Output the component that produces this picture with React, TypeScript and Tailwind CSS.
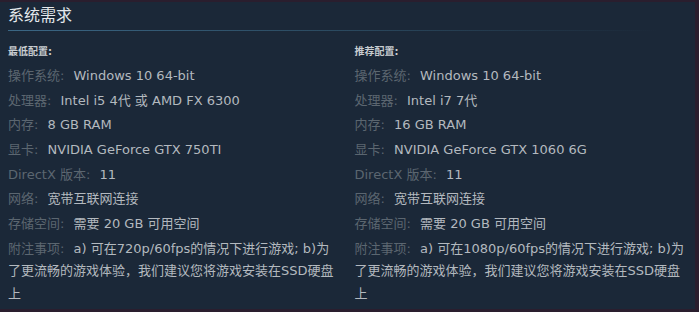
import React from 'react';

type Row = { label: string; value: string };

const minimum: Row[] = [
  { label: '操作系统:', value: 'Windows 10 64-bit' },
  { label: '处理器:', value: 'Intel i5 4代 或 AMD FX 6300' },
  { label: '内存:', value: '8 GB RAM' },
  { label: '显卡:', value: 'NVIDIA GeForce GTX 750TI' },
  { label: 'DirectX 版本:', value: '11' },
  { label: '网络:', value: '宽带互联网连接' },
  { label: '存储空间:', value: '需要 20 GB 可用空间' },
  { label: '附注事项:', value: 'a) 可在720p/60fps的情况下进行游戏; b)为了更流畅的游戏体验，我们建议您将游戏安装在SSD硬盘上' },
];

const recommended: Row[] = [
  { label: '操作系统:', value: 'Windows 10 64-bit' },
  { label: '处理器:', value: 'Intel i7 7代' },
  { label: '内存:', value: '16 GB RAM' },
  { label: '显卡:', value: 'NVIDIA GeForce GTX 1060 6G' },
  { label: 'DirectX 版本:', value: '11' },
  { label: '网络:', value: '宽带互联网连接' },
  { label: '存储空间:', value: '需要 20 GB 可用空间' },
  { label: '附注事项:', value: 'a) 可在1080p/60fps的情况下进行游戏; b)为了更流畅的游戏体验，我们建议您将游戏安装在SSD硬盘上' },
];

const Column = ({ title, rows }: { title: string; rows: Row[] }) => (
  <div className="w-[341px]">
    <div className="text-[10px] font-bold text-[#c9cdd1] leading-[14px] mb-[6px]">{title}</div>
    <ul className="w-[334px]">
      {rows.map((r) => (
        <li key={r.label} className="text-[13px] leading-[22.5px] mb-[2.2px]">
          <span className="text-[#5b6670]">{r.label}</span>{' '}
          <span className="text-[#b3b9bf] ml-[5px]">{r.value}</span>
        </li>
      ))}
    </ul>
  </div>
);

export default function App() {
  return (
    <div
      className="w-[699px] h-[312px] bg-[#1b2838] border-t-2 border-b-[3px] border-r-[4px] border-[#2a1e2e] overflow-hidden"
      style={{ fontFamily: '"DejaVu Sans", "Noto Sans CJK SC", sans-serif' }}
    >
      <div className="pl-[8px] pt-[4px]">
        <h2 className="text-[16px] leading-[20px] text-[#e4e8ec]">系统需求</h2>
        <div className="mt-[4px] h-[1px] w-[650px] bg-gradient-to-r from-[#3b6785] via-[#2b4a60] to-transparent" />
        <div className="mt-[14px] flex gap-[6px]">
          <Column title="最低配置:" rows={minimum} />
          <Column title="推荐配置:" rows={recommended} />
        </div>
      </div>
    </div>
  );
}
